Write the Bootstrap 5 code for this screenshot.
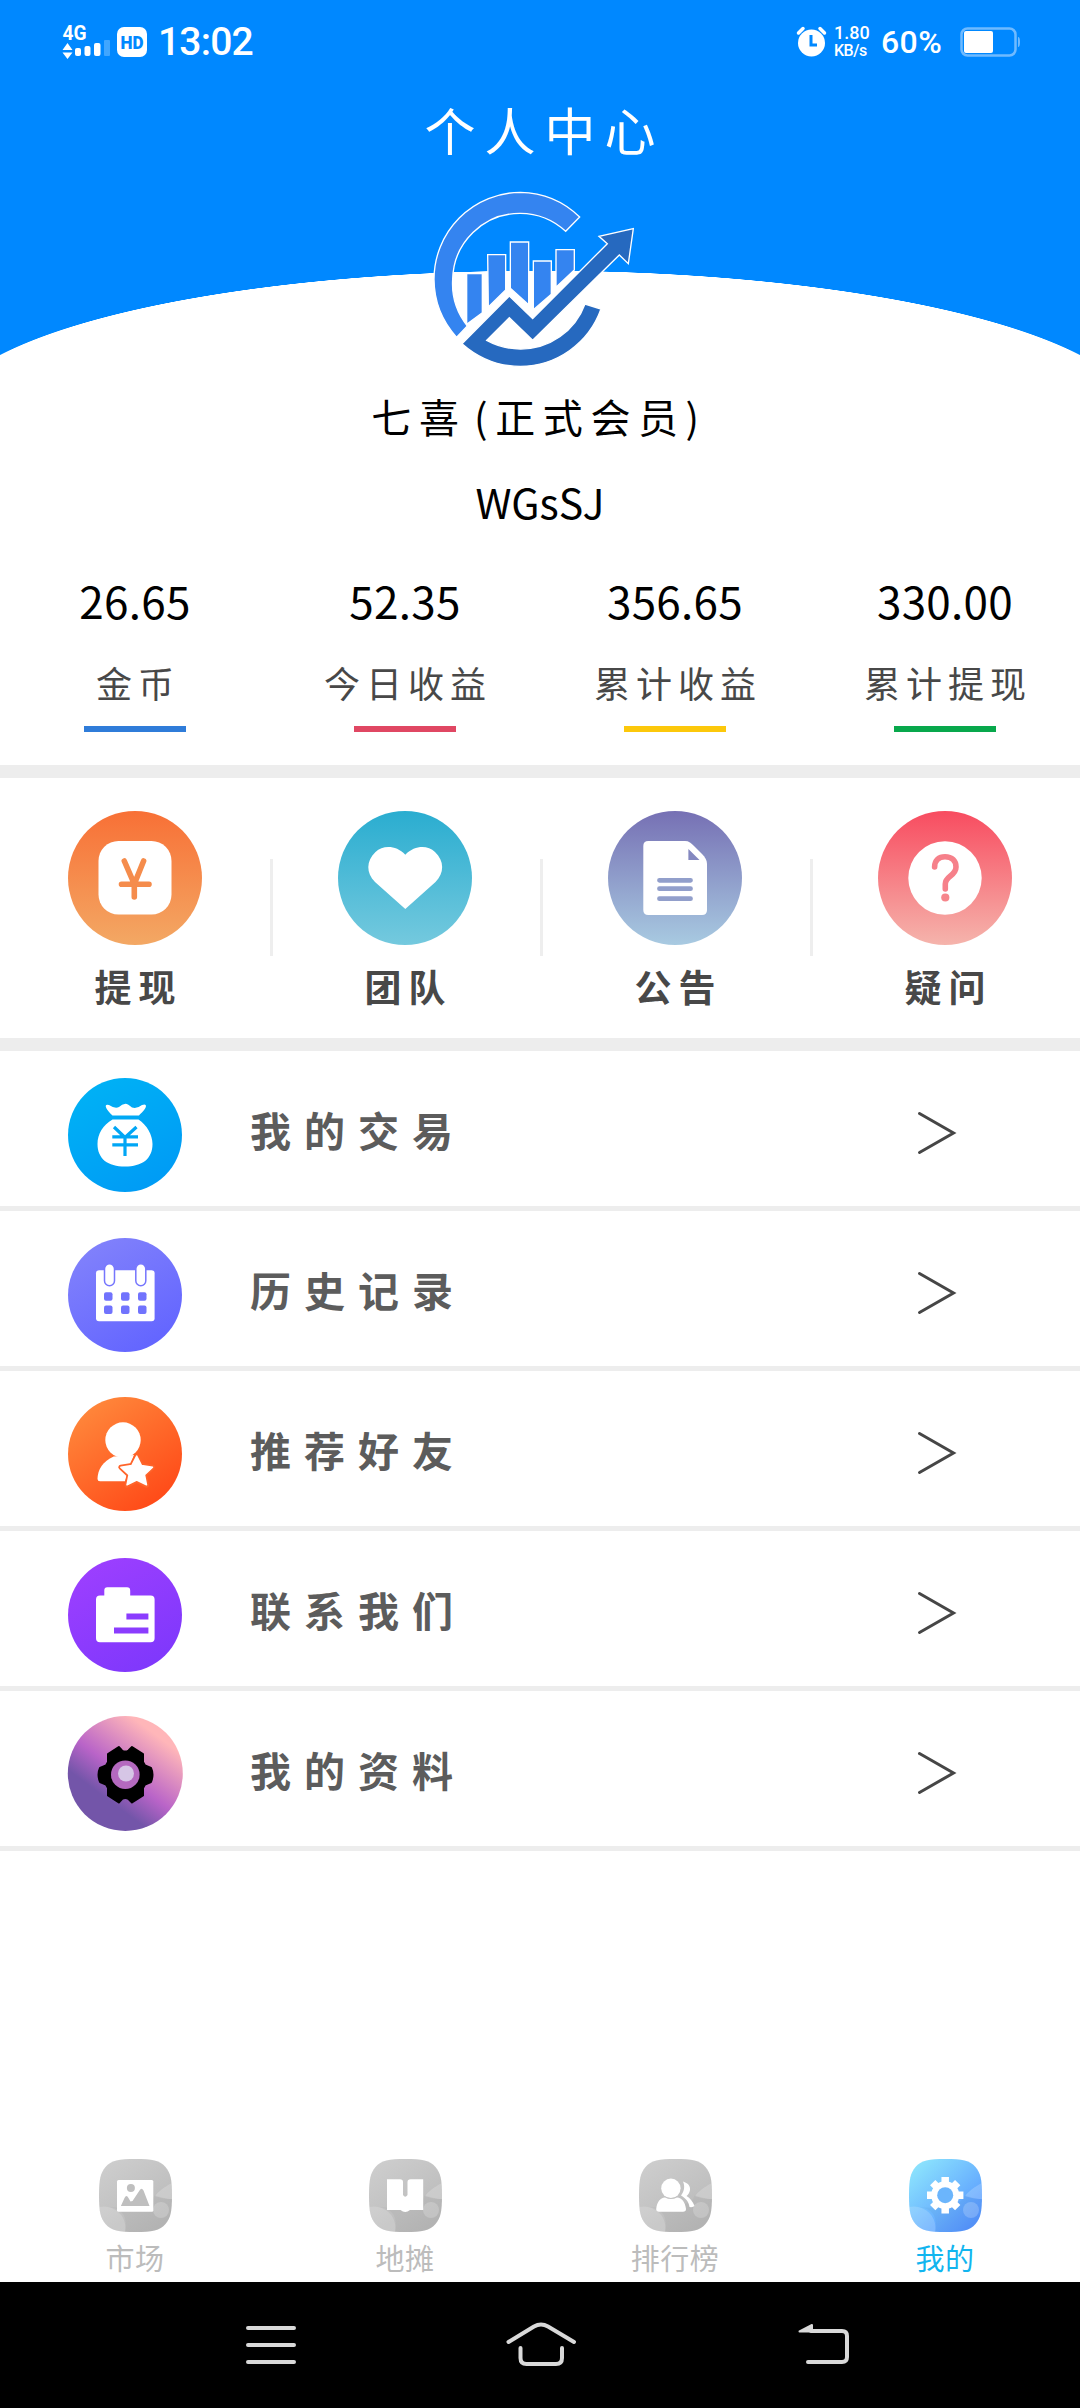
<!DOCTYPE html>
<html lang="zh-CN">
<head>
<meta charset="utf-8">
<meta name="viewport" content="width=device-width, initial-scale=1">
<title>个人中心</title>
<link rel="stylesheet" href="https://cdn.jsdelivr.net/npm/bootstrap@5.3.0/dist/css/bootstrap.min.css">
<style>
  body { font-family: "Noto Sans CJK SC", sans-serif; color: #000; background: #fff; }
  svg { display: block; flex: none; overflow: visible; }
  .screen { width: 1080px; height: 2408px; }
  .hero { height: 368px; background: radial-gradient(ellipse 600px 149px at 540px 419.5px, #fff 99.7%, #0088ff 100%); }
  .statusbar { height: 84px; padding: 0 60px 0 62px; font-family: Roboto, sans-serif; line-height: 1; }
  .clock { font-size: 39px; font-weight: 500; margin-left: 10px; letter-spacing: -.8px; }
  .rate { font-size: 18px; line-height: 17px; width: 37px; font-weight: 500; }
  .rate-unit { font-size: 16px; line-height: 19px; letter-spacing: -.5px; }
  .percent { font-size: 32px; font-weight: 500; letter-spacing: .4px; width: 79px; margin-left: 10px; }
  .page-title { font-size: 51px; letter-spacing: 9px; text-indent: 9px; line-height: 60px; margin-top: 15px; }
  .logo { margin: 31px 0 0 430px; }
  .nickname { font-size: 40px; letter-spacing: 7.6px; word-spacing: -9px; line-height: 60px; padding-top: 18px; margin-right: 2px; }
  .usercode { font-size: 41px; line-height: 60px; margin-top: 25px; }
  .stats { height: 234px; padding-top: 39px; }
  .amount { font-size: 44px; line-height: 60px; letter-spacing: .3px; }
  .stat-name { font-size: 36px; letter-spacing: 6px; text-indent: 6px; line-height: 50px; color: #484848; margin-top: 27px; }
  .stat-bar { width: 102px; height: 6px; margin: 19px auto 0; }
  .band { height: 13px; background: #ededed; }
  .actions { height: 260px; }
  .action-item { padding-top: 33px; position: relative; }
  .action-item + .action-item::before { content: ""; position: absolute; left: 0; top: 81px; width: 3px; height: 97px; background: #eee; }
  .action-name { font-size: 37px; font-weight: 700; letter-spacing: 7px; text-indent: 7px; line-height: 50px; margin-top: 16px; color: #484848; }
  .menu-row { height: 160px; border-bottom: 5px solid #ededed; padding: 12px 124px 0 68px; }
  .menu-name { font-size: 41px; font-weight: 700; letter-spacing: 13px; line-height: 60px; color: #5c5c5c; margin: -11px 0 0 68px; }
  .chevron { margin-top: -3px; }
  .tabs { height: 123px; }
  .tab-name { font-size: 29px; letter-spacing: .5px; line-height: 40px; margin-top: 5px; color: #bcbcbc; }
  .tab-name.current { color: #12b5ef; }
  .softkeys { height: 126px; background: #000; }
</style>
</head>
<body>
<svg width="0" height="0" class="position-absolute">
  <defs>
    <linearGradient id="gOrange" x2="0" y2="1"><stop stop-color="#f87036"/><stop offset="1" stop-color="#f3a864"/></linearGradient>
    <linearGradient id="gTeal" x2="0" y2="1"><stop stop-color="#2aadd0"/><stop offset="1" stop-color="#74c9de"/></linearGradient>
    <linearGradient id="gViolet" x2="0" y2="1"><stop stop-color="#7670b4"/><stop offset="1" stop-color="#a8cae1"/></linearGradient>
    <linearGradient id="gRed" x2="0" y2="1"><stop stop-color="#f84c60"/><stop offset="1" stop-color="#f5b4ac"/></linearGradient>
    <linearGradient id="gBlue" x2=".6" y2="1"><stop stop-color="#00b4f5"/><stop offset="1" stop-color="#009cf5"/></linearGradient>
    <linearGradient id="gIndigo" x2=".6" y2="1"><stop stop-color="#8585fb"/><stop offset="1" stop-color="#6466ff"/></linearGradient>
    <linearGradient id="gFire" x2=".7" y2="1"><stop stop-color="#ff9040"/><stop offset="1" stop-color="#ff4a18"/></linearGradient>
    <linearGradient id="gPurple" x2=".6" y2="1"><stop stop-color="#a040ff"/><stop offset="1" stop-color="#8038fc"/></linearGradient>
    <linearGradient id="gDusk" x1=".2" y1=".85" x2=".76" y2=".1"><stop offset=".2" stop-color="#7355a9"/><stop offset=".47" stop-color="#b964c8"/><stop offset=".95" stop-color="#ffb6b9"/></linearGradient>
    <linearGradient id="gGrey" x2=".7" y2="1"><stop stop-color="#cfcfcf"/><stop offset="1" stop-color="#b9b9b9"/></linearGradient>
    <linearGradient id="gSky" x1=".1" y1=".1" x2=".85" y2=".9"><stop stop-color="#8be2fd"/><stop offset="1" stop-color="#5696ff"/></linearGradient>
    <clipPath id="tile"><path id="tileShape" d="M36.500 0C53 0 61 1.500 66.500 8C71.500 14 73 20 73 36.500C73 53 71.500 59 66.500 65C61 71.500 53 73 36.500 73C20 73 12 71.500 6.500 65C1.500 59 0 53 0 36.500C0 20 1.500 14 6.500 8C12 1.500 20 0 36.500 0Z"/></clipPath>
    <g id="tileDecor" clip-path="url(#tile)">
      <path d="M56 36C62 38 66 40 73 40V73H26C29 58 24 50 10 48C30 50 45 48 54 40Z" fill="#000" opacity=".03"/>
      <circle cx="5" cy="69" r="21.500" fill="#fff" opacity=".17"/>
      <circle cx="62" cy="51" r="8" fill="#fff" opacity=".2"/>
      <path d="M73 24C65 28 59 33 56 37C62 39 66 40 73 40Z" fill="#fff" opacity=".2"/>
    </g>
  </defs>
</svg>

<main class="screen d-flex flex-column">
  <header class="hero">
    <div class="statusbar d-flex align-items-center text-white">
      <svg width="86" height="60" viewBox="62 12 86 60" fill="#fff">
        <text x="62.500" y="40" font-size="20" font-weight="700" textLength="24" lengthAdjust="spacingAndGlyphs">4G</text>
        <path d="M62.500 50L67.500 43L72.500 50ZM62.500 52.500L67.500 59L72.500 52.500Z"/>
        <rect x="75" y="48" width="6" height="8" rx="2"/><rect x="84.500" y="46" width="6" height="10" rx="2"/><rect x="94" y="43" width="6.500" height="13" rx="2"/>
        <rect x="104" y="40" width="6" height="16" rx="1" opacity=".25"/>
        <rect x="117" y="27" width="30" height="30" rx="7"/>
        <text x="120.500" y="48.500" font-size="18" font-weight="900" fill="#0088ff" textLength="23" lengthAdjust="spacingAndGlyphs">HD</text>
      </svg>
      <span class="clock">13:02</span>
      <svg class="ms-auto me-2" width="29" height="30" viewBox="0 0 29 30">
        <circle cx="14.500" cy="16" r="13.500" fill="#fff"/>
        <path d="M1.500 6L6 1.500M27.500 6L23 1.500" stroke="#fff" stroke-width="3.500" stroke-linecap="round"/>
        <path d="M14 8V18H20" fill="none" stroke="#0088ff" stroke-width="3"/>
      </svg>
      <div class="rate">1.80<div class="rate-unit">KB/s</div></div>
      <span class="percent">60%</span>
      <svg width="60" height="30" viewBox="0 0 60 30">
        <rect x="1.500" y="1.500" width="54" height="27" rx="6" fill="none" stroke="#6fbaff" stroke-width="2.500"/>
        <rect x="4" y="4" width="29" height="22" rx="2" fill="#fff"/>
        <path d="M58 10Q60 10 60 15Q60 20 58 20Z" fill="#6fbaff"/>
      </svg>
    </div>
    <h1 class="page-title text-center text-white fw-normal mb-0">个人中心</h1>
    <svg class="logo" width="206.670" height="180" viewBox="270 60 620 540" stroke="#fff" stroke-width="4">
      <g fill="#3484f0">
        <path d="M719 141A261 261 0 0 0 541 67A261 261 0 0 0 282 328A261 261 0 0 0 350 502L382 468A204 204 0 0 1 338 328A202 202 0 0 1 541 130A202 202 0 0 1 677 184Z"/>
        <path d="M380 311H427V428L380 463ZM443 254H497V360L445 411ZM511 216H566V404L511 355ZM580 273H634V373L580 419ZM648 239H703V300L648 352Z"/>
      </g>
      <path fill="#2669bf" d="M366 521L508 378L578 446L802 221L777 199L880 176L865 281L838 255L578 511L508 443L440 511Q488 537 541 537A205 205 0 0 0 735 402L783 417A258 258 0 0 1 541 589Q443 589 366 521Z"/>
    </svg>
  </header>

  <section class="text-center">
    <div class="nickname">七喜 (正式会员)</div>
    <div class="usercode">WGsSJ</div>
  </section>

  <section class="stats row g-0 text-center">
    <div class="col-3"><div class="amount">26.65</div><div class="stat-name">金币</div><div class="stat-bar" style="background:#2f7cd9"></div></div>
    <div class="col-3"><div class="amount">52.35</div><div class="stat-name">今日收益</div><div class="stat-bar" style="background:#e04763"></div></div>
    <div class="col-3"><div class="amount">356.65</div><div class="stat-name">累计收益</div><div class="stat-bar" style="background:#fcc80b"></div></div>
    <div class="col-3"><div class="amount">330.00</div><div class="stat-name">累计提现</div><div class="stat-bar" style="background:#08a84c"></div></div>
  </section>
  <div class="band"></div>

  <section class="actions row g-0 text-center">
    <div class="action-item col-3">
      <svg class="mx-auto" width="134" height="134">
        <circle cx="67" cy="67" r="67" fill="url(#gOrange)"/><rect x="30.500" y="30" width="73" height="73.500" rx="20" fill="#fff"/>
        <path d="M56.300 50L66.300 73L75.600 50M53.500 73.300H81M66.300 73V86" fill="none" stroke="#f58c4c" stroke-width="5.600" stroke-linecap="round"/>
      </svg>
      <div class="action-name">提现</div>
    </div>
    <div class="action-item col-3">
      <svg class="mx-auto" width="134" height="134">
        <circle cx="67" cy="67" r="67" fill="url(#gTeal)"/>
        <path fill="#fff" d="M67.300 43.700C58 34 45 34 37.500 41C28 50 28 62 37 71L67.300 98L97.500 71C106.500 62 106.500 50 97 41C89.500 34 77 34 67.300 43.700Z"/>
      </svg>
      <div class="action-name">团队</div>
    </div>
    <div class="action-item col-3">
      <svg class="mx-auto" width="134" height="134">
        <circle cx="67" cy="67" r="67" fill="url(#gViolet)"/>
        <path fill="#fff" d="M40.300 30H77C81 30 83 32 86 35L94 43C97 46 99 49 99 53V99Q99 104 94 104H40.300Q35.300 104 35.300 99V35Q35.300 30 40.300 30Z"/>
        <path fill="#8488c0" d="M80.400 38V49H91.500Z"/>
        <path d="M51.500 69.300H82.500M51.500 77.700H82.500M51.500 87.700H82.500" stroke="#929fcb" stroke-width="4.800" stroke-linecap="round"/>
      </svg>
      <div class="action-name">公告</div>
    </div>
    <div class="action-item col-3">
      <svg class="mx-auto" width="134" height="134">
        <circle cx="67" cy="67" r="67" fill="url(#gRed)"/><circle cx="67" cy="67" r="36.700" fill="#fff"/>
        <path d="M56.600 56C56.600 49 61 45.700 67 45.700C74 45.700 78 50 78 56C78 65 67.300 65 67.300 73V78" fill="none" stroke="#f6808a" stroke-width="5.600" stroke-linecap="round"/>
        <circle cx="67.300" cy="86.500" r="4.100" fill="#f6868c"/>
      </svg>
      <div class="action-name">疑问</div>
    </div>
  </section>
  <div class="band"></div>

  <nav>
    <div class="menu-row d-flex align-items-center">
      <svg width="114" height="114">
        <circle cx="57" cy="57" r="57" fill="url(#gBlue)"/>
        <path fill="#fff" d="M44.500 37.500C42 35 38 31 37.700 28Q38 26 41 27Q47 31 51 29Q54 26 57.500 25.800Q60 26 64 29.500Q69 31 74 27Q78 25.500 78 28C77.500 32 73 35 71 37.500ZM44.500 41.500H70.500C79 47 84.500 57 84.500 66C84.500 81 74 88.500 57 88.500S29.500 81 29.500 66C29.500 56 35 47 44.500 41.500Z"/>
        <path d="M46 49L57 59.500L68.500 49M44.300 58.800H70M44.300 66.800H70M57 59V78" fill="none" stroke="#00a6f5" stroke-width="3.200"/>
      </svg>
      <div class="menu-name">我的交易</div>
      <svg class="chevron ms-auto" width="38" height="42"><path d="M1.500 1.500L35.500 21L1.500 40.500" fill="none" stroke="#464646" stroke-width="3" stroke-linecap="round"/></svg>
    </div>
    <div class="menu-row d-flex align-items-center">
      <svg width="114" height="114">
        <circle cx="57" cy="57" r="57" fill="url(#gIndigo)"/><rect x="28" y="32.300" width="58.600" height="51" rx="3" fill="#fff"/>
        <g fill="#fff" stroke="#7676fd" stroke-width="1.500"><rect x="36.500" y="25.700" width="10" height="22" rx="5"/><rect x="67.800" y="25.700" width="10" height="22" rx="5"/></g>
        <g fill="#7173fd"><rect x="36" y="54.300" width="8.500" height="8.500" rx="2"/><rect x="53" y="54.300" width="8.500" height="8.500" rx="2"/><rect x="70" y="54.300" width="8.500" height="8.500" rx="2"/><rect x="36" y="67.600" width="8.500" height="8.500" rx="2"/><rect x="53" y="67.600" width="8.500" height="8.500" rx="2"/><rect x="70" y="67.600" width="8.500" height="8.500" rx="2"/></g>
      </svg>
      <div class="menu-name">历史记录</div>
      <svg class="chevron ms-auto" width="38" height="42"><path d="M1.500 1.500L35.500 21L1.500 40.500" fill="none" stroke="#464646" stroke-width="3" stroke-linecap="round"/></svg>
    </div>
    <div class="menu-row d-flex align-items-center">
      <svg width="114" height="114" viewBox="0 1 114 114">
        <circle cx="57" cy="57" r="57" fill="url(#gFire)"/><circle cx="55" cy="43" r="17.700" fill="#fff"/>
        <path fill="#fff" d="M45.600 59.500C35 64 29.500 73 29.500 82Q29.500 84.300 32 84.300H57L66 58Z"/>
        <path d="M68.700 58.500L73.500 68.500L84.500 70.200L76.500 77.800L78.500 88.300L68.700 83.300L59 88.300L61 77.800L52.800 70.200L63.800 68.500Z" fill="#ff642a" stroke="#ff642a" stroke-width="5" stroke-linejoin="round"/>
        <path d="M68.700 59L73.500 68.500L84.500 70.200L76.500 77.800L78.500 87.800L68.700 83L59 87.800L61 77.800L52.800 70.200L63.800 68.500Z" fill="#fff" stroke="#fff" stroke-width="1.500" stroke-linejoin="round"/>
      </svg>
      <div class="menu-name">推荐好友</div>
      <svg class="chevron ms-auto" width="38" height="42"><path d="M1.500 1.500L35.500 21L1.500 40.500" fill="none" stroke="#464646" stroke-width="3" stroke-linecap="round"/></svg>
    </div>
    <div class="menu-row d-flex align-items-center">
      <svg width="114" height="114">
        <circle cx="57" cy="57" r="57" fill="url(#gPurple)"/>
        <path fill="#fff" d="M39.300 29.300H59Q62.200 29.300 62.200 32.500V37.600H82.600Q86.600 37.600 86.600 41.600V80.300Q86.600 84.300 82.600 84.300H32Q28 84.300 28 80.300V41.600Q28 37.600 32 37.600H36.300V32.300Q36.300 29.300 39.300 29.300Z"/>
        <path fill="#8b3cfe" d="M58.400 55.600H80.400V61.600H58.400ZM46 69.600H80.400V75.600H46Z"/>
      </svg>
      <div class="menu-name">联系我们</div>
      <svg class="chevron ms-auto" width="38" height="42"><path d="M1.500 1.500L35.500 21L1.500 40.500" fill="none" stroke="#464646" stroke-width="3" stroke-linecap="round"/></svg>
    </div>
    <div class="menu-row d-flex align-items-center">
      <svg width="114" height="114" viewBox="0 2 114 114">
        <circle cx="57.300" cy="57.500" r="57.500" fill="url(#gDusk)"/>
        <path d="M50.800 31L40 38V46L38 49.500L32 52Q29 58.500 32 66L38 68.500L40 72V79.500L50.800 86.500L54 83Q57.300 81 60.500 83L64 86.500L75 79.500V72L77 68.500L83 66Q86 58.500 83 52L77 49.500L75 46V38L64 31L60.500 34.500Q57.300 36.500 54 34.500Z" stroke="#000" stroke-width="2" stroke-linejoin="round"/>
        <circle cx="57.300" cy="58.700" r="14.300" fill="#b469bf"/><circle cx="58" cy="57.500" r="8" fill="#d6c6e6"/>
      </svg>
      <div class="menu-name">我的资料</div>
      <svg class="chevron ms-auto" width="38" height="42"><path d="M1.500 1.500L35.500 21L1.500 40.500" fill="none" stroke="#464646" stroke-width="3" stroke-linecap="round"/></svg>
    </div>
  </nav>

  <footer class="mt-auto">
    <div class="tabs row g-0 text-center">
      <div class="col-3">
        <svg class="mx-auto" width="73" height="73"><use href="#tileShape" fill="url(#gGrey)"/><use href="#tileDecor"/>
          <rect x="18" y="21" width="36.300" height="31.700" rx="1.500" fill="#fff"/><circle cx="31.900" cy="29" r="4" fill="#bfbfbf"/>
          <path fill="#bfbfbf" d="M21.900 47L25.500 39Q27.400 35 29.500 39L31.500 42.500L33.500 42L40.500 31.500Q42.500 28 44.500 31.500L50.500 47Z"/></svg>
        <div class="tab-name">市场</div>
      </div>
      <div class="col-3">
        <svg class="mx-auto" width="73" height="73"><use href="#tileShape" fill="url(#gGrey)"/><use href="#tileDecor"/>
          <path fill="#fff" d="M18 20.300H31Q34 20.300 34 23V36Q36.200 39.500 38.500 36V23Q38.500 20.300 41.500 20.300H54.200V51H41Q38.500 53 36.200 53T31.500 51H18Z"/></svg>
        <div class="tab-name">地摊</div>
      </div>
      <div class="col-3">
        <svg class="mx-auto" width="73" height="73"><use href="#tileShape" fill="url(#gGrey)"/><use href="#tileDecor"/>
          <g fill="#fff"><circle cx="31.900" cy="29.300" r="9.700"/><path d="M17.200 50C18 43 21 39 26 38.500Q32 41.500 38 38.500C43 39 46 43 47 50Q47 52.700 44 52.700H20Q17.200 52.700 17.200 50Z"/>
          <path d="M44 22.500C49 24 51.500 27 51 31C50.500 34 49 36 47.500 37C51 39 54 43 55.500 47Q54 48.500 50.500 48C50 43 46.500 39 42 36.500C45.500 32 46 27 44 22.500Z"/></g></svg>
        <div class="tab-name">排行榜</div>
      </div>
      <div class="col-3">
        <svg class="mx-auto" width="73" height="73"><use href="#tileShape" fill="url(#gSky)"/><use href="#tileDecor"/>
          <g transform="translate(36.200 36.200)"><g stroke="#fff" stroke-width="7.500" stroke-linejoin="round">
            <path d="M0-18.200V18.200M-18.200 0H18.200M-12.500-12.500L12.500 12.500M12.500-12.500L-12.500 12.500"/></g>
            <circle r="14" fill="#fff"/><circle r="8" fill="#6bb5fc"/></g></svg>
        <div class="tab-name current">我的</div>
      </div>
    </div>
    <div class="softkeys row g-0">
      <svg class="col-12" width="1080" height="126" viewBox="0 2282 1080 126" fill="none" stroke="#d9d9d9" stroke-width="4" stroke-linecap="round" stroke-linejoin="round">
        <path d="M248 2328H294M248 2345H294M248 2362H294"/>
        <path d="M508.500 2342L534 2326.500Q541 2322.500 548 2326.500L574 2342M520.500 2348V2358Q520.500 2364 526.500 2364H556Q562 2364 562 2358V2348"/>
        <path d="M811 2331H842Q847 2331 847 2336V2357Q847 2362 842 2362H808"/>
        <path d="M799.500 2331.500L812 2325V2331.500Z" fill="#d9d9d9" stroke-width="2"/>
      </svg>
    </div>
  </footer>
</main>
<script src="https://cdn.jsdelivr.net/npm/bootstrap@5.3.0/dist/js/bootstrap.bundle.min.js"></script>
</body>
</html>
